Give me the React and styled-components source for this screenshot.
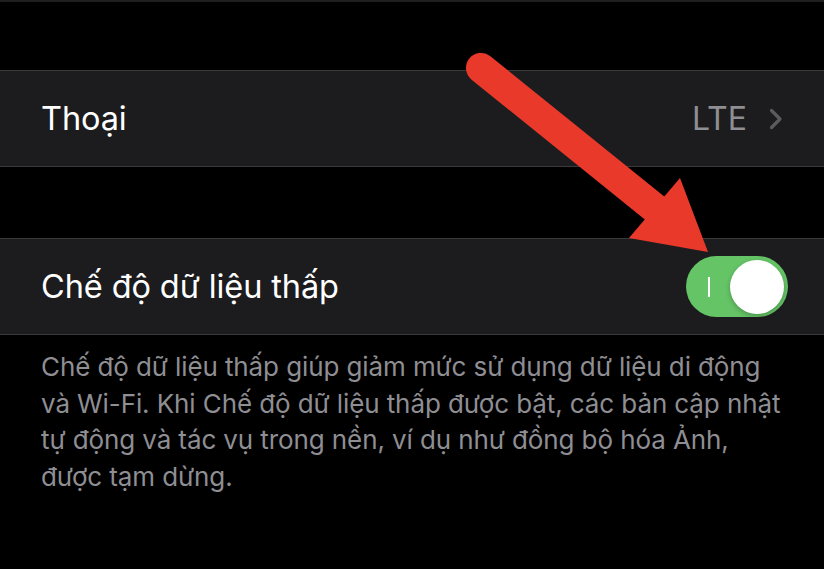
import React from "react";
import styled, { createGlobalStyle } from "styled-components";

const GlobalStyle = createGlobalStyle`
  html, body {
    margin: 0;
    padding: 0;
    background: #000;
  }
  body {
    font-family: "Inter", "Roboto", sans-serif;
    -webkit-font-smoothing: antialiased;
  }
`;

const Screen = styled.div`
  position: relative;
  width: 824px;
  height: 569px;
  overflow: hidden;
  background: #000;
  border-top: 2px solid #1f1f21;
  box-sizing: border-box;
  padding-top: 68px;
`;

const Group = styled.div`
  background: #1c1c1e;
  border-top: 1px solid #3a3a3c;
  border-bottom: 1px solid #3a3a3c;
  margin-bottom: ${(props) => props.$gap || 0}px;
`;

const Row = styled.div`
  height: 95px;
  display: flex;
  align-items: center;
  justify-content: space-between;
  padding: 0 36px 0 41px;
`;

const Label = styled.span`
  color: #fff;
  font-size: 32.5px;
  letter-spacing: -0.1px;
`;

const Detail = styled.span`
  display: flex;
  align-items: center;
  gap: 22px;
  color: #8e8e93;
  font-size: 32px;
  padding-right: 5px;
`;

const Chevron = styled.svg`
  width: 14px;
  height: 22px;
`;

const Switch = styled.div`
  position: relative;
  width: 102px;
  height: 61px;
  border-radius: 31px;
  background: #65c466;
  display: flex;
  align-items: center;
  justify-content: flex-end;
  padding: 0 4px;
  box-sizing: border-box;
`;

const OnMark = styled.span`
  position: absolute;
  left: 22px;
  top: 21px;
  width: 2px;
  height: 20px;
  background: #fff;
`;

const Knob = styled.span`
  width: 54px;
  height: 54px;
  border-radius: 50%;
  background: #fff;
  box-shadow: 0 2px 5px rgba(0, 0, 0, 0.25);
`;

const Footer = styled.p`
  margin: 0;
  padding: 14px 40px 0 41px;
  color: #8e8e93;
  font-size: 26px;
  line-height: 36.5px;
  letter-spacing: -0.1px;
`;

const ArrowLayer = styled.svg`
  position: absolute;
  left: 0;
  top: 0;
  width: 824px;
  height: 569px;
  pointer-events: none;
`;

export default function App() {
  return (
    <>
      <GlobalStyle />
      <Screen>
        <Group $gap={71}>
          <Row>
            <Label>Thoại</Label>
            <Detail>
              LTE
              <Chevron viewBox="0 0 14 22">
                <path
                  d="M2.5 2.5 L11 11 L2.5 19.5"
                  fill="none"
                  stroke="#5b5b5f"
                  strokeWidth="3.2"
                  strokeLinecap="round"
                  strokeLinejoin="round"
                />
              </Chevron>
            </Detail>
          </Row>
        </Group>
        <Group>
          <Row>
            <Label>Chế độ dữ liệu thấp</Label>
            <Switch>
              <OnMark />
              <Knob />
            </Switch>
          </Row>
        </Group>
        <Footer>
          Chế độ dữ liệu thấp giúp giảm mức sử dụng dữ liệu di động và Wi-Fi.
          Khi Chế độ dữ liệu thấp được bật, các bản cập nhật tự động và tác vụ
          trong nền, ví dụ như đồng bộ hóa Ảnh, được tạm dừng.
        </Footer>
        <ArrowLayer viewBox="0 0 824 569">
          <line
            x1="481"
            y1="66"
            x2="662"
            y2="212"
            stroke="#e8392a"
            strokeWidth="30"
            strokeLinecap="round"
          />
          <polygon points="708,250 629,236 680,176" fill="#e8392a" />
        </ArrowLayer>
      </Screen>
    </>
  );
}
